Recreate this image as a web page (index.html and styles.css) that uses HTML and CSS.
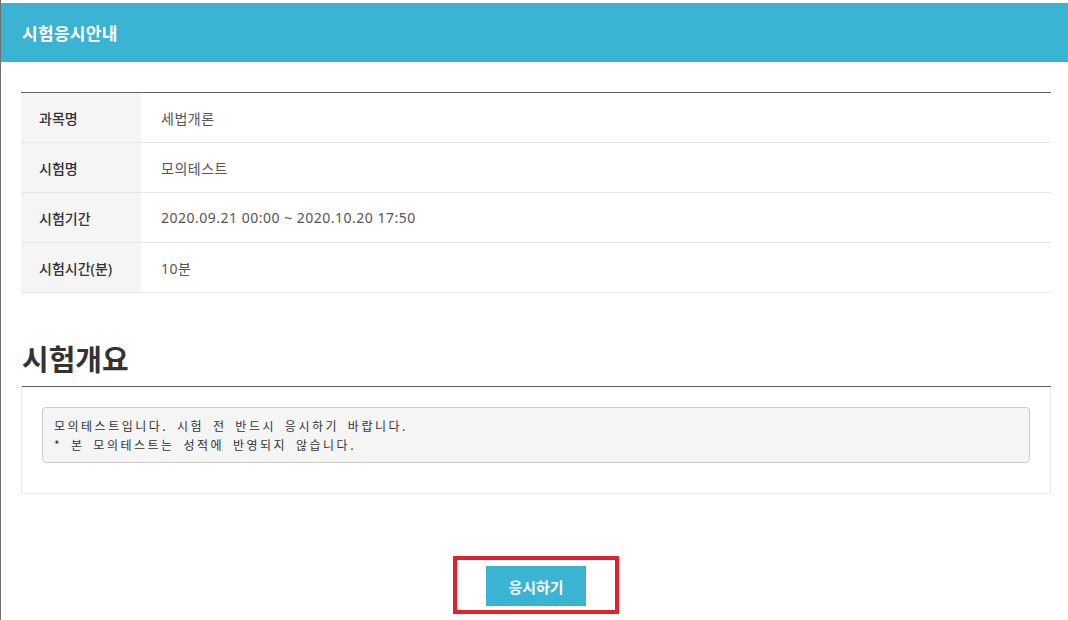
FILE: index.html
```html
<!DOCTYPE html>
<html lang="ko">
<head>
  <meta charset="UTF-8">
  <meta name="viewport" content="width=device-width, initial-scale=1.0">
  <title>시험응시안내</title>
  <link rel="stylesheet" href="styles.css">
</head>
<body>
<div class="page">
  <div class="page-header">
    <h1>시험응시안내</h1>
  </div>

  <div class="content">
    <table class="info-table">
      <tr>
        <th>과목명</th>
        <td>세법개론</td>
      </tr>
      <tr>
        <th>시험명</th>
        <td>모의테스트</td>
      </tr>
      <tr>
        <th>시험기간</th>
        <td>2020.09.21 00:00 ~ 2020.10.20 17:50</td>
      </tr>
      <tr>
        <th>시험시간(분)</th>
        <td>10분</td>
      </tr>
    </table>

    <h2 class="section-title">시험개요</h2>
    <div class="summary-box">
      <pre>모의테스트입니다. 시험 전 반드시 응시하기 바랍니다.
* 본 모의테스트는 성적에 반영되지 않습니다.</pre>
    </div>

    <div class="actions">
      <span class="highlight">
        <button type="button" class="btn-start">응시하기</button>
      </span>
    </div>
  </div>
</div>
</body>
</html>
```

FILE: styles.css
```css
html, body {
  margin: 0;
  padding: 0;
  background-color: #fff;
}

body {
  font-family: "Noto Sans", "Noto Sans CJK KR", sans-serif;
  color: #333;
  font-size: 14px;
}

.page {
  border-left: 1px solid #707070;
  min-height: 620px;
  padding-top: 3px;
  box-sizing: border-box;
}

.page-header {
  background-color: #3bb3d3;
  height: 59px;
  display: flex;
  align-items: center;
  padding-left: 21px;
}

.page-header h1 {
  margin: 0;
  color: #fff;
  font-size: 17px;
  font-weight: bold;
  letter-spacing: 0.3px;
}

.content {
  padding: 30px 17px 0 20px;
}

.info-table {
  width: 100%;
  border-collapse: collapse;
  border-top: 1px solid #5e5e5e;
}

.info-table th,
.info-table td {
  height: 49px;
  padding: 0;
  border-bottom: 1px solid #e6e6e6;
  text-align: left;
  font-size: 14px;
}

.info-table th {
  width: 102px;
  padding-left: 18px;
  background-color: #f5f5f5;
  color: #333;
  font-weight: 500;
}

.info-table td {
  padding-left: 20px;
  color: #555;
  font-weight: normal;
  letter-spacing: 0.5px;
}

.section-title {
  margin: 42px 0 0 1px;
  font-size: 29px;
  font-weight: bold;
  color: #333;
  line-height: 49px;
  padding-bottom: 2px;
  border-bottom: 1px solid #5e5e5e;
}

.summary-box {
  border: 1px solid #e8e8e8;
  border-top: none;
  padding: 20px 20px 30px 20px;
}

.summary-box pre {
  margin: 0;
  padding: 8px 11px;
  background-color: #f5f5f5;
  border: 1px solid #ccc;
  border-radius: 4px;
  font-family: "Noto Sans CJK KR", sans-serif;
  font-size: 12px;
  letter-spacing: 2.5px;
  word-spacing: 3px;
  line-height: 19px;
  color: #333;
}

.actions {
  text-align: center;
  margin-top: 62px;
}

/* red annotation frame round the button */
.highlight {
  display: inline-block;
  border: 4px solid #e3212b;
  padding: 6px 29px 4px 29px;
}

.btn-start {
  display: block;
  width: 100px;
  height: 40px;
  border: none;
  background-color: #3bb3d3;
  color: #fff;
  font-family: "Noto Sans CJK KR", sans-serif;
  font-size: 15px;
  font-weight: bold;
  cursor: pointer;
}
```
